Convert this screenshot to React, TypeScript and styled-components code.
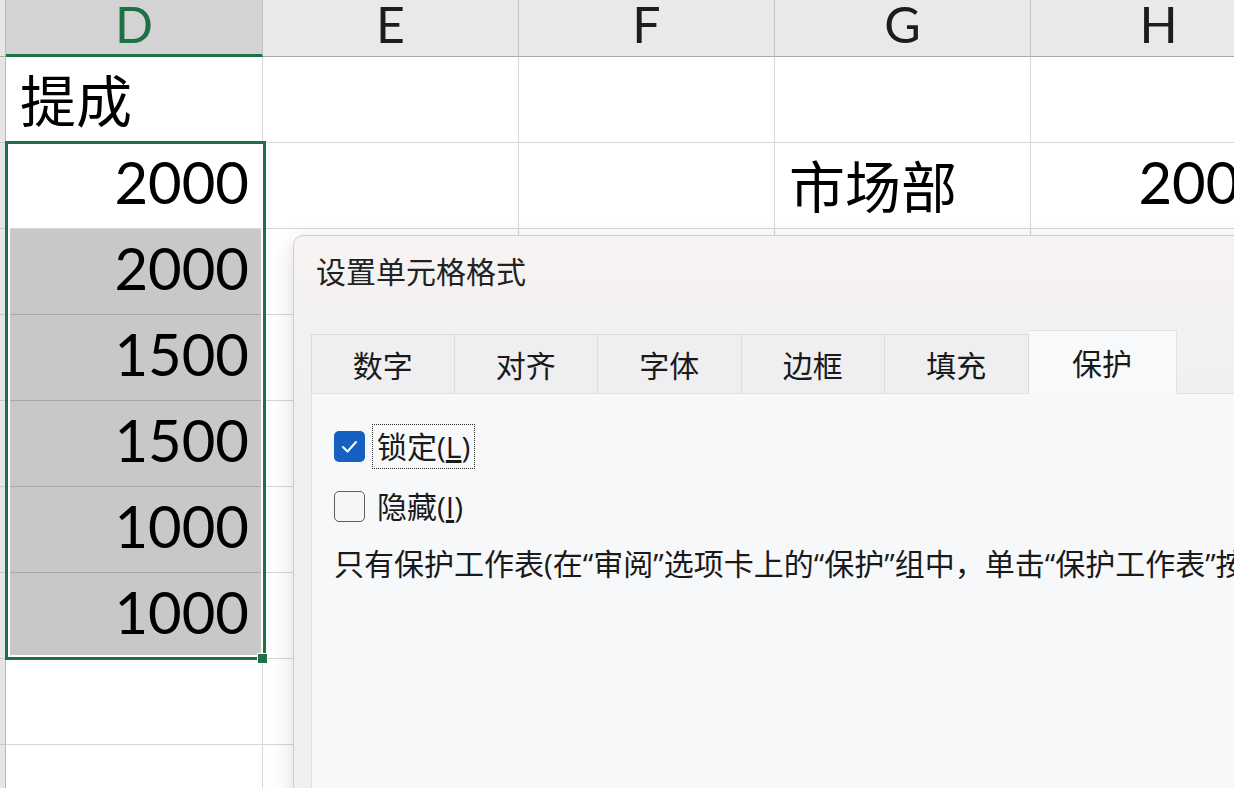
import React from "react";
import styled, { createGlobalStyle } from "styled-components";

const GREEN = "#1e7145";
const LINE = "#d6d6d6";

const GlobalStyle = createGlobalStyle`
    html, body {
        margin: 0;
        padding: 0;
        background: #ffffff;
        overflow: hidden;
    }
`;

const Sheet = styled.div`
    position: relative;
    width: 1234px;
    height: 788px;
    overflow: hidden;
    background: #ffffff;
`;

const Grid = styled.div`
    display: grid;
    grid-template-columns: 6px 257px repeat(4, 256px);
    grid-template-rows: 57px repeat(9, 86px);
    width: max-content;
`;

const RowHead = styled.div<{ $top?: boolean }>`
    box-sizing: border-box;
    background: #e6e6e6;
    border-right: 1px solid #b9b9b9;
    border-bottom: 1px solid ${(p) => (p.$top ? "#a9a9a9" : "#c9c9c9")};
`;

const ColHead = styled.div<{ $active?: boolean }>`
    box-sizing: border-box;
    display: flex;
    justify-content: center;
    background: ${(p) => (p.$active ? "#d3d3d3" : "#e9e9e9")};
    border-right: 1px solid #c3c3c3;
    border-bottom: ${(p) => (p.$active ? `3px solid ${GREEN}` : "1px solid #a9a9a9")};
    color: ${(p) => (p.$active ? GREEN : "#1c1c1c")};
    font-family: Lato, "Liberation Sans", sans-serif;
    font-size: 50px;
    line-height: 49px;
`;

const Cell = styled.div<{ $num?: boolean; $shade?: boolean }>`
    box-sizing: border-box;
    display: flex;
    align-items: flex-end;
    justify-content: ${(p) => (p.$num ? "flex-end" : "flex-start")};
    padding: ${(p) => (p.$num ? "0 13px 17px 14px" : "0 13px 16px 14px")};
    background: ${(p) => (p.$shade ? "#c8c8c8" : "#ffffff")};
    border-right: 1px solid ${LINE};
    border-bottom: 1px solid ${(p) => (p.$shade ? "#a8a8a8" : LINE)};
    color: #000;
    font-family: ${(p) => (p.$num ? 'Lato, "Liberation Sans", sans-serif' : '"Noto Sans CJK SC", sans-serif')};
    font-size: ${(p) => (p.$num ? "58px" : "56px")};
    line-height: 1;
    white-space: nowrap;
`;

const Selection = styled.div`
    position: absolute;
    left: 5px;
    top: 141px;
    width: 261px;
    height: 519px;
    box-sizing: border-box;
    border: 3px solid ${GREEN};
    box-shadow: inset 0 0 0 2px #ffffff;
    pointer-events: none;
`;

const FillHandle = styled.div`
    position: absolute;
    left: 257px;
    top: 653px;
    width: 9px;
    height: 9px;
    background: ${GREEN};
    border: 1px solid #ffffff;
`;

const Dialog = styled.div`
    position: absolute;
    left: 293px;
    top: 235px;
    width: 1000px;
    height: 620px;
    box-sizing: border-box;
    padding-left: 17px;
    border: 1px solid #cdcdcd;
    border-radius: 10px;
    background: linear-gradient(180deg, #f8f3f3 0%, #f3f1f2 14%, #f0f0f2 26%);
    box-shadow: 0 6px 24px rgba(0, 0, 0, 0.14);
    font-family: "Open Sans", "Noto Sans CJK SC", sans-serif;
    font-size: 30px;
    color: #1a1a1a;
`;

const Title = styled.div`
    padding: 18px 0 0 5px;
    line-height: 36px;
    margin-bottom: 41px;
    color: #222;
`;

const TabBar = styled.div`
    display: flex;
    align-items: flex-end;
    height: 63px;
    margin-bottom: -1px;
    position: relative;
    z-index: 1;
`;

const Tab = styled.div<{ $active?: boolean }>`
    box-sizing: border-box;
    display: flex;
    align-items: center;
    justify-content: center;
    width: ${(p) => (p.$active ? "148px" : "143.5px")};
    height: ${(p) => (p.$active ? "64px" : "60px")};
    background: ${(p) => (p.$active ? "#f8f9fb" : "#efeff1")};
    border: 1px solid ${(p) => (p.$active ? "#e2e2e4" : "#dcdcde")};
    border-left-width: 0;
    border-bottom-color: ${(p) => (p.$active ? "#f8f9fb" : "#e2e2e4")};
    &:first-child {
        border-left-width: 1px;
    }
`;

const Panel = styled.div`
    display: flex;
    flex-direction: column;
    gap: 15px;
    height: 400px;
    padding: 30px 22px;
    background: #f7f8fa;
    border: 1px solid #e2e2e4;
    border-right: none;
`;

const CheckRow = styled.div`
    display: flex;
    align-items: center;
    gap: 7px;
    height: 45px;
`;

const Box = styled.div<{ $checked?: boolean }>`
    box-sizing: border-box;
    width: 31px;
    height: 31px;
    border-radius: 5px;
    display: flex;
    align-items: center;
    justify-content: center;
    background: ${(p) => (p.$checked ? "#1461c2" : "#f6f6f6")};
    border: ${(p) => (p.$checked ? "none" : "1.5px solid #5e5e5e")};
`;

const Label = styled.span<{ $focus?: boolean }>`
    padding: 0 4px;
    line-height: 43px;
    border: 1px dotted ${(p) => (p.$focus ? "#2a2a2a" : "transparent")};
`;

const Description = styled.div`
    line-height: 40px;
    white-space: nowrap;
`;

const columns = ["D", "E", "F", "G", "H"];

const rows: string[][] = [
    ["提成", "", "", "", ""],
    ["2000", "", "", "市场部", "2000"],
    ["2000", "", "", "", ""],
    ["1500", "", "", "", ""],
    ["1500", "", "", "", ""],
    ["1000", "", "", "", ""],
    ["1000", "", "", "", ""],
    ["", "", "", "", ""],
    ["", "", "", "", ""],
];

const tabs = ["数字", "对齐", "字体", "边框", "填充", "保护"];

function Check() {
    return (
        <svg width="31" height="31" viewBox="0 0 31 31">
            <polyline points="9,16 13.5,20.5 22,11" fill="none" stroke="#fff" strokeWidth="2" strokeLinecap="round" strokeLinejoin="round" />
        </svg>
    );
}

export default function App() {
    const cells = rows.map((row, r) => [
        <RowHead key={`rh${r}`} />,
        ...row.map((value, c) => {
            const isNum = /^\d+$/.test(value);
            const shade = c === 0 && r >= 2 && r <= 6;
            return (
                <Cell key={`${r}-${c}`} $num={isNum} $shade={shade}>
                    {value}
                </Cell>
            );
        }),
    ]);

    return (
        <Sheet>
            <GlobalStyle />
            <Grid>
                <RowHead $top />
                {columns.map((col, i) => (
                    <ColHead key={col} $active={i === 0}>{col}</ColHead>
                ))}
                {cells}
            </Grid>
            <Selection />
            <FillHandle />
            <Dialog>
                <Title>设置单元格格式</Title>
                <TabBar>
                    {tabs.map((t, i) => (
                        <Tab key={t} $active={i === tabs.length - 1}>{t}</Tab>
                    ))}
                </TabBar>
                <Panel>
                    <CheckRow>
                        <Box $checked><Check /></Box>
                        <Label $focus>锁定(<u>L</u>)</Label>
                    </CheckRow>
                    <CheckRow>
                        <Box />
                        <Label>隐藏(<u>I</u>)</Label>
                    </CheckRow>
                    <Description>
                        只有保护工作表(在“审阅”选项卡上的“保护”组中，单击“保护工作表”按钮)后，锁定单元格或隐藏公式才有效。
                    </Description>
                </Panel>
            </Dialog>
        </Sheet>
    );
}
